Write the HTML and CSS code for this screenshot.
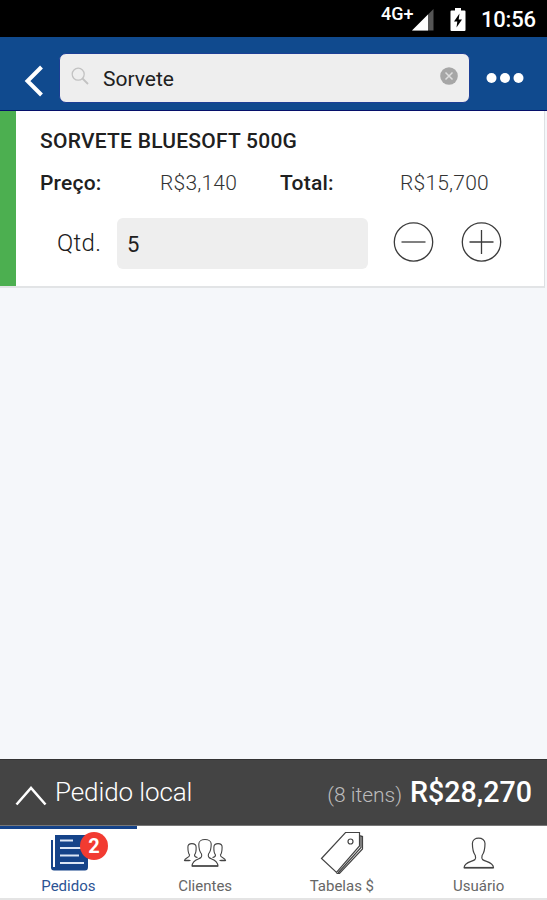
FILE: index.html
```html
<!DOCTYPE html>
<html lang="pt-BR">
<head>
<meta charset="utf-8">
<title>Pedidos</title>
<link rel="stylesheet" href="styles.css">
</head>
<body>
<div class="app">
  <div class="status">
    <span class="network">4G+</span>
    <svg class="signal" width="22" height="22" viewBox="0 0 22 22"><path d="M0 21.500 21.500 0V21.500Z" fill="#555"/><path d="M0 21.500 16 5.500V21.500Z" fill="#fff"/></svg>
    <svg class="battery" width="16" height="23" viewBox="0 0 16 23"><path d="M5 0h6v2.500h3.500q1 0 1 1V22q0 1-1 1h-13q-1 0-1-1V3.500q0-1 1-1H5Z" fill="#fff"/><path d="M9.500 5.500 4 13.500h3.300L6.500 19.500 12 11.500H8.700Z" fill="#000"/></svg>
    <span class="clock">10:56</span>
  </div>
  <header class="header">
    <svg class="back" width="20" height="32" viewBox="0 0 20 32"><path d="M18.500 2 4.500 16l14 14" fill="none" stroke="#fff" stroke-width="4"/></svg>
    <div class="search">
      <svg class="lens" width="18" height="18" viewBox="0 0 18 18" fill="none" stroke="#c2c2c2" stroke-width="1.300"><circle cx="7.200" cy="7.200" r="6"/><path d="m11.500 11.500 5.500 5.500" stroke-width="1.800"/></svg>
      <span class="query">Sorvete</span>
      <svg class="clear" width="18" height="18" viewBox="0 0 18 18"><circle cx="9" cy="9" r="8.800" fill="#a6a6a6"/><path d="m5.500 5.500 7 7m0-7-7 7" stroke="#dedede" stroke-width="1.500"/></svg>
    </div>
    <svg class="more" width="38" height="12" viewBox="0 0 38 12" fill="#fff"><circle cx="5.500" cy="6" r="5"/><circle cx="19" cy="6" r="5"/><circle cx="32.500" cy="6" r="5"/></svg>
  </header>
  <main class="content">
    <article class="item">
      <div class="accent"></div>
      <div class="details">
        <h1 class="name">SORVETE BLUESOFT 500G</h1>
        <div class="prices">
          <b>Preço:</b><span>R$3,140</span>
          <b>Total:</b><span>R$15,700</span>
        </div>
        <div class="quantity">
          <span class="qty-label">Qtd.</span>
          <div class="qty-field">5</div>
          <svg class="minus" width="42" height="42" viewBox="0 0 42 42" fill="none" stroke="#3c3c3c" stroke-width="1.300"><circle cx="20.500" cy="21" r="19.200"/><path d="M8.500 21h24"/></svg>
          <svg class="plus" width="42" height="42" viewBox="0 0 42 42" fill="none" stroke="#3c3c3c" stroke-width="1.300"><circle cx="20.500" cy="21" r="19.200"/><path d="M8.500 21h24M20.500 9v24"/></svg>
        </div>
      </div>
    </article>
  </main>
  <section class="summary">
    <svg class="chevron" width="34" height="22" viewBox="0 0 34 22"><path d="M1.500 19.500 16 3l14.500 16.500" fill="none" stroke="#fff" stroke-width="2.500"/></svg>
    <span class="order">Pedido local</span>
    <span class="count">(8 itens)</span>
    <strong class="amount">R$28,270</strong>
  </section>
  <nav class="tabs">
    <div class="tab active">
      <div class="icon">
        <svg class="news" width="37" height="37" viewBox="0 0 37 37"><path d="M0 6h2v27h2V1h33v32q0 3.500-3 3.500H3Q0 36.500 0 33.500Z" fill="#154389"/><path d="M2.800 5.500V33" stroke="#fff" stroke-width="1.200"/><path d="M9 6.500h13M9 14h22M9 21.500h19M9 29h24" stroke="#dce6f5" stroke-width="2"/></svg>
        <span class="badge">2</span>
      </div>
      <span class="label">Pedidos</span>
    </div>
    <div class="tab">
      <div class="icon"><svg width="44" height="40" viewBox="0 0 44 40" fill="none" stroke="#444" stroke-width="1.100"><path d="M18.500 21C16 18 15.800 14 15.800 11 15.800 5 28.200 5 28.200 11c0 3-.2 7-2.700 10-.5 1.500-.3 2.500.5 3.500 2 2 8.500 1.500 9 8.500H9c.5-7 7-6.500 9-8.500.8-1 1-2 .5-3.500Z"/><path d="M14.500 24.500c-2-.3-3-1-3-2.500 1.500-2 1.800-4.500 1.600-8-.2-4.500-8.200-4.500-8.200 0 0 3.500.2 6 1.700 8 0 3-4.600 2.500-5.100 5.500h6M29.500 24.500c2-.3 3-1 3-2.500-1.500-2-1.800-4.500-1.600-8 .2-4.500 8.200-4.500 8.200 0 0 3.500-.2 6-1.700 8 0 3 4.600 2.500 5.100 5.500h-6"/><path d="M9 33h26M1.500 27.500h5M37.500 27.500h5" stroke-width="1.700"/></svg></div>
      <span class="label">Clientes</span>
    </div>
    <div class="tab">
      <div class="icon tag"><svg width="45" height="44" viewBox="0 0 45 44" fill="none" stroke="#444" stroke-width="1.200"><path d="M2.500 27.500 26.500 1.500h14V15L17.500 41.500ZM40.500 4.500l3 1V18L20.500 42.500H17.500M19 42 42 16.500V5"/><circle cx="31.500" cy="10.500" r="2.500"/></svg></div>
      <span class="label">Tabelas $</span>
    </div>
    <div class="tab">
      <div class="icon"><svg width="32" height="40" viewBox="0 0 32 40" fill="none" stroke="#444" stroke-width="1.200"><path d="M12.300 22.500C9.800 19 9.400 14 9.400 10.500 9.400 3.300 22 3.300 22 10.500c0 3.500-.4 8.500-2.900 12-.4 1.500-.4 3 .4 4 2.300 2.500 10.700 2 11 8.200H1.100c.3-6.200 8.700-5.700 10.900-8.200.8-1 .7-2.500.3-4Z"/><path d="M1.100 34.700h29.400" stroke-width="1.600"/></svg></div>
      <span class="label">Usuário</span>
    </div>
  </nav>
</div>
</body>
</html>
```
FILE: styles.css
```css
* { box-sizing: border-box; }
body { margin: 0; font-family: Roboto, "Liberation Sans", sans-serif; color: #202020; }
svg { display: block; flex: none; }
span, b, strong, h1 { white-space: nowrap; }
.app { width: 547px; height: 900px; display: flex; flex-direction: column; background: #f5f7fa; overflow: hidden; }
.status { height: 37px; flex: none; display: flex; align-items: flex-start; background: #000; color: #fff; padding: 0 11px 0 381px; }
.network { width: 32px; margin-top: 4px; font-size: 18px; line-height: 20px; font-weight: 500; }
.signal { margin: 9px 0 0 -1px; }
.battery { margin: 8px 0 0 16px; }
.clock { margin: 7px 0 0 15px; font-size: 22px; line-height: 26px; font-weight: 500; letter-spacing: -0.2px; }
.header { height: 74px; flex: none; display: flex; align-items: flex-start; background: #104a8e; border-bottom: 1px solid #06106a; padding-left: 23px; }
.back { margin-top: 28px; }
.search { width: 411px; height: 50px; margin: 16px 0 0 16px; display: flex; align-items: flex-start; background: #eee; border: 1px solid #1c3f96; border-radius: 7px; padding: 0 11px; }
.lens { margin-top: 13px; }
.query { margin: 12px auto 0 14px; font-size: 21px; line-height: 26px; }
.clear { margin-top: 13px; }
.more { margin: 35px 0 0 16px; }
.content { flex: 1; }
.item { display: flex; width: 545px; height: 177px; background: #fff; border-right: 1px solid #dde0e3; border-bottom: 2px solid #e2e4e6; }
.accent { width: 16px; flex: none; background: #4caf50; }
.details { padding: 17px 0 0 24px; }
.name { margin: 0; font-size: 21px; line-height: 26px; font-weight: 500; letter-spacing: 0.24px; }
.prices { display: grid; grid-template-columns: 120px 120px 120px auto; margin-top: 16px; font-size: 21px; line-height: 26px; color: #333; font-weight: 300; letter-spacing: 0.2px; }
.prices b { font-weight: 500; color: #202020; }
.quantity { display: flex; align-items: flex-start; margin-top: 22px; }
.qty-label { width: 60px; margin: 11px 0 0 17px; font-size: 24px; line-height: 28px; font-weight: 300; letter-spacing: 0.3px; }
.qty-field { width: 251px; height: 51px; background: #eee; border-radius: 6px; padding: 13px 10px; font-size: 22px; line-height: 27px; }
.minus { margin: 3px 0 0 25px; }
.plus { margin: 3px 0 0 26px; }
.summary { height: 67px; flex: none; display: flex; align-items: flex-start; background: #444; color: #fff; border-top: 1px solid #333; border-bottom: 1px solid #777; padding: 0 15px; }
.chevron { margin-top: 25px; }
.order { margin: 15px auto 0 6px; font-size: 26px; line-height: 34px; font-weight: 300; letter-spacing: -0.1px; }
.count { margin: 22px 8px 0 0; font-size: 21px; line-height: 26px; font-weight: 300; color: #bbb; }
.amount { margin-top: 14px; font-size: 28.600px; line-height: 36px; font-weight: 500; }
.tabs { height: 74px; flex: none; display: grid; grid-template-columns: repeat(4, 1fr); background: #fff; border-bottom: 2px solid #e4e4e4; }
.tab { display: flex; flex-direction: column; align-items: center; border-top: 3px solid transparent; color: #666; }
.active { border-color: #154389; color: #2c5394; }
.icon { position: relative; height: 48px; padding-top: 4px; }
.tag { padding-top: 2px; }
.news { margin: 1px -1px 0 1px; }
.badge { position: absolute; left: 30px; top: 3px; width: 28px; height: 28px; border-radius: 50%; background: #f23b31; color: #fff; font-size: 20px; line-height: 28px; font-weight: 700; text-align: center; }
.label { font-size: 15px; line-height: 18px; }
```
